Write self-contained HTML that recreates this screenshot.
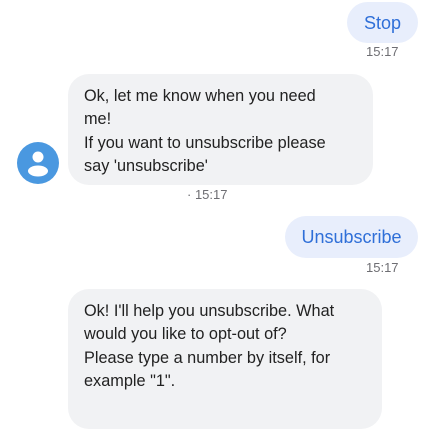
<!DOCTYPE html>
<html><head><style>
body{margin:0;width:435px;height:400px;background:#fff;position:relative;overflow:hidden;font-family:"Liberation Sans",sans-serif;}
.b{position:absolute;border-radius:21px;white-space:nowrap;}
.u{background:#e8eefc;color:#2f6fd8;font-size:18px;line-height:42px;text-align:center;}
.bot{background:#f1f2f4;color:#222;font-size:16.3px;line-height:23.3px;padding:11px 0 0 16px;box-sizing:border-box;}
.t{position:absolute;font-size:13px;color:#6e6e73;}
</style></head><body>
<div class="b u" style="left:347px;top:2px;width:71px;height:41px;">Stop</div>
<div class="t" style="left:366px;top:44px;">15:17</div>
<div class="b bot" style="left:68px;top:74px;width:305px;height:111px;">Ok, let me know when you need<br>me!<br>If you want to unsubscribe please<br>say 'unsubscribe'</div>
<svg style="position:absolute;left:17px;top:142px" width="42" height="42" viewBox="0 0 42 42"><circle cx="21" cy="21" r="21" fill="#4a98e0"/><circle cx="21" cy="15" r="5.5" fill="#fff"/><ellipse cx="21" cy="29" rx="10" ry="5.5" fill="#fff"/></svg>
<div class="t" style="left:187px;top:187px;">· 15:17</div>
<div class="b u" style="left:285px;top:216px;width:133px;height:42px;">Unsubscribe</div>
<div class="t" style="left:366px;top:260px;">15:17</div>
<div class="b bot" style="left:68px;top:289px;width:314px;height:140px;">Ok! I'll help you unsubscribe. What<br>would you like to opt-out of?<br>Please type a number by itself, for<br>example "1".</div>
</body></html>
